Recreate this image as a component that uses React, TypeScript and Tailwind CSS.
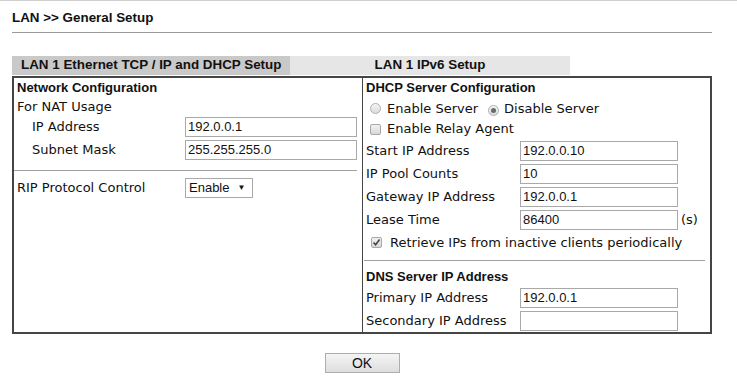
import React from "react";

const sans = { fontFamily: '"DejaVu Sans", Verdana, sans-serif' };
const arial = { fontFamily: '"Liberation Sans", Arial, sans-serif' };

function Input({ value, w }: { value: string; w: string }) {
  return (
    <div
      className={`${w} h-[20px] border border-[#a9a9a9] bg-white flex items-center pl-[2px] text-[13px] text-[#111] leading-none`}
      style={arial}
    >
      {value}
    </div>
  );
}

function Radio({ checked }: { checked?: boolean }) {
  return (
    <span className="inline-flex w-[11px] h-[11px] rounded-full border border-[#b0b0b0] bg-gradient-to-b from-[#f4f4f4] to-[#dcdcdc] items-center justify-center">
      {checked && <span className="w-[5px] h-[5px] rounded-full bg-[#6a6a6a]" />}
    </span>
  );
}

function Check({ checked }: { checked?: boolean }) {
  return (
    <span className="inline-flex w-[11px] h-[11px] rounded-[2px] border border-[#a8a8a8] bg-gradient-to-b from-[#f2f2f2] to-[#d8d8d8] items-center justify-center">
      {checked && (
        <svg width="9" height="9" viewBox="0 0 9 9">
          <path d="M1.5 4.5 L3.6 6.8 L7.6 1.6" stroke="#444" strokeWidth="1.6" fill="none" />
        </svg>
      )}
    </span>
  );
}

function RRow({ label, value, suffix }: { label: string; value: string; suffix?: string }) {
  return (
    <div className="h-[23px] flex items-center">
      <div className="w-[157px] pl-[3px]">{label}</div>
      <Input value={value} w="w-[158px]" />
      {suffix && <span className="ml-[3px]">{suffix}</span>}
    </div>
  );
}

export default function App() {
  return (
    <div className="w-[737px] h-[390px] bg-white text-[13px] text-[#111] overflow-hidden" style={sans}>
      <div className="h-px bg-[#cfcfcf]" />
      <div className="pl-3 pt-[9px] h-[31px] font-bold text-[13.4px] leading-[16px]" style={arial}>
        LAN &gt;&gt; General Setup
      </div>
      <div className="ml-3 w-[700px] h-px bg-[#999]" />
      <div className="h-[23px]" />
      <div className="ml-3 flex h-[19px] font-bold text-[13.4px]" style={arial}>
        <div className="w-[278px] bg-[#c9c9c9] pl-[9px] flex items-center">
          LAN 1 Ethernet TCP / IP and DHCP Setup
        </div>
        <div className="w-[280px] bg-[#e6e6e6] flex items-center justify-center">LAN 1 IPv6 Setup</div>
      </div>
      <div className="ml-3 mt-px w-[700px] border-2 border-[#454545] flex">
        <div className="w-[349px] border-r border-[#454545]">
          <div className="h-[20px] flex items-center pl-[3px] font-bold text-[13px]" style={arial}>
            Network Configuration
          </div>
          <div className="h-[17px] flex items-center pl-[3px]">For NAT Usage</div>
          <div className="h-[23px] flex items-center">
            <div className="w-[171px] pl-[18px]">IP Address</div>
            <Input value="192.0.0.1" w="w-[172px]" />
          </div>
          <div className="h-[23px] flex items-center">
            <div className="w-[171px] pl-[18px]">Subnet Mask</div>
            <Input value="255.255.255.0" w="w-[172px]" />
          </div>
          <div className="mt-[9px] h-px bg-[#a0a0a0] w-[343px]" />
          <div className="mt-[6px] h-[22px] flex items-center">
            <div className="w-[171px] pl-[3px]">RIP Protocol Control</div>
            <div
              className="w-[68px] h-[20px] border border-[#a9a9a9] flex items-center pl-[3px] text-[13px]"
              style={arial}
            >
              Enable
              <span className="ml-[8px] text-[8px]">▼</span>
            </div>
          </div>
        </div>
        <div className="flex-1">
          <div className="h-[20px] flex items-center pl-[3px] font-bold text-[13px]" style={arial}>
            DHCP Server Configuration
          </div>
          <div className="h-[21px] flex items-center pl-[7px]">
            <Radio />
            <span className="ml-[6px]">Enable Server</span>
            <span className="ml-[10px]">
              <Radio checked />
            </span>
            <span className="ml-[5px]">Disable Server</span>
          </div>
          <div className="h-[20px] flex items-center pl-[7px]">
            <Check />
            <span className="ml-[6px]">Enable Relay Agent</span>
          </div>
          <RRow label="Start IP Address" value="192.0.0.10" />
          <RRow label="IP Pool Counts" value="10" />
          <RRow label="Gateway IP Address" value="192.0.0.1" />
          <RRow label="Lease Time" value="86400" suffix="(s)" />
          <div className="h-[23px] flex items-center pl-[8px]">
            <Check checked />
            <span className="ml-[8px]">Retrieve IPs from inactive clients periodically</span>
          </div>
          <div className="mt-[6px] h-px bg-[#a0a0a0] w-[341px] ml-px" />
          <div className="mt-[6px] h-[19px] flex items-center pl-[3px] font-bold text-[13px]" style={arial}>
            DNS Server IP Address
          </div>
          <RRow label="Primary IP Address" value="192.0.0.1" />
          <RRow label="Secondary IP Address" value="" />
        </div>
      </div>
      <div className="ml-3 w-[700px] flex justify-center mt-[19px]">
        <div
          className="w-[75px] h-[20px] border border-[#adadad] bg-gradient-to-b from-[#f4f4f4] to-[#dedede] flex items-center justify-center text-[14px]"
          style={arial}
        >
          OK
        </div>
      </div>
    </div>
  );
}
